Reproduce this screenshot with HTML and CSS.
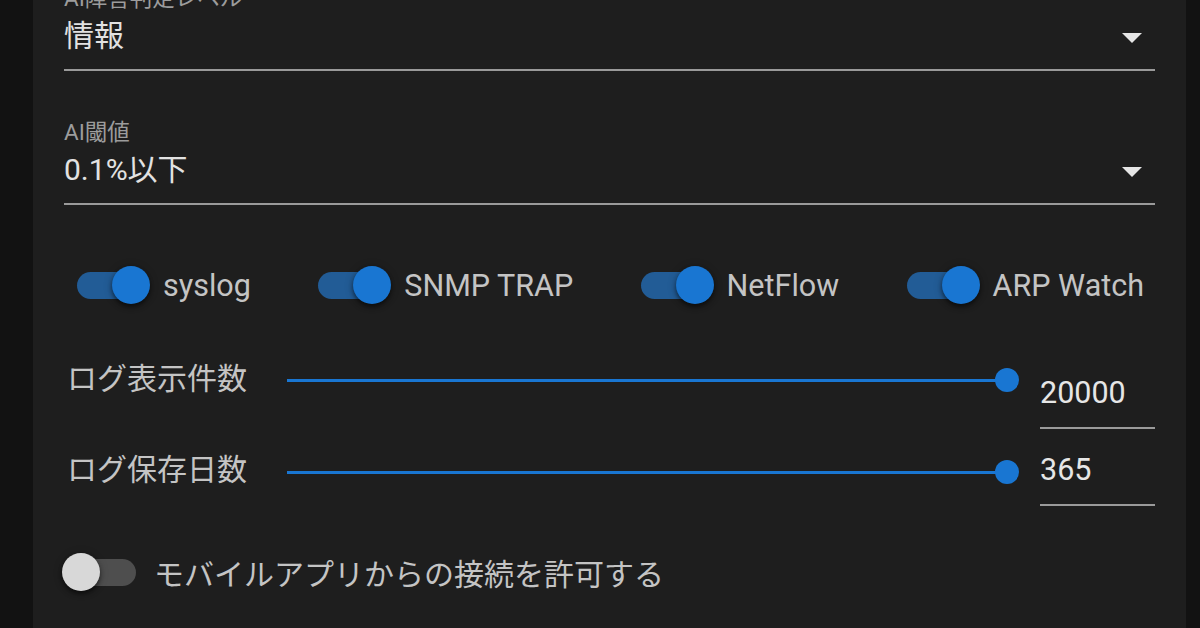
FILE: index.html
```html
<!DOCTYPE html>
<html lang="ja">
<head>
    <meta charset="UTF-8">
    <meta name="viewport" content="width=device-width, initial-scale=1.0">
    <title>設定</title>
    <link rel="stylesheet" href="styles.css">
</head>
<body>
    <div class="card">
        <div class="field field-first">
            <div class="field-label">AI障害判定レベル</div>
            <div class="field-value">
                <span>情報</span>
                <span class="arrow"></span>
            </div>
        </div>

        <div class="field">
            <div class="field-label">AI閾値</div>
            <div class="field-value">
                <span>0.1%以下</span>
                <span class="arrow"></span>
            </div>
        </div>

        <div class="switch-row">
            <label class="switch on">
                <span class="track"><span class="thumb"></span></span>
                <span class="switch-label">syslog</span>
            </label>
            <label class="switch on">
                <span class="track"><span class="thumb"></span></span>
                <span class="switch-label">SNMP TRAP</span>
            </label>
            <label class="switch on">
                <span class="track"><span class="thumb"></span></span>
                <span class="switch-label">NetFlow</span>
            </label>
            <label class="switch on">
                <span class="track"><span class="thumb"></span></span>
                <span class="switch-label">ARP Watch</span>
            </label>
        </div>

        <div class="slider-row row-count">
            <div class="slider-label">ログ表示件数</div>
            <div class="slider"><span class="slider-thumb"></span></div>
            <div class="num-field">20000</div>
        </div>

        <div class="slider-row row-days">
            <div class="slider-label">ログ保存日数</div>
            <div class="slider"><span class="slider-thumb"></span></div>
            <div class="num-field">365</div>
        </div>

        <div class="mobile-row">
            <label class="switch">
                <span class="track"><span class="thumb"></span></span>
                <span class="switch-label">モバイルアプリからの接続を許可する</span>
            </label>
        </div>
    </div>
</body>
</html>
```

FILE: styles.css
```css
* {
    margin: 0;
    padding: 0;
    box-sizing: border-box;
}

body {
    font-family: Roboto, "Noto Sans CJK JP", sans-serif;
    background: #121212;
    height: 100vh;
    overflow: hidden;
    display: flex;
}

.card {
    margin-left: 33px;
    width: 1153px;
    min-height: 100vh;
    background: #1e1e1e;
    padding: 0 31px;
}

/* select fields */
.field {
    margin-top: 47px;
    padding-bottom: 13px;
    border-bottom: 2px solid #9a9a9a;
}

.field-first {
    margin-top: -16px;
}

.field-label {
    font-size: 22.5px;
    line-height: 28px;
    color: #9c9c9c;
    margin-bottom: 4px;
}

.field-value {
    display: flex;
    align-items: center;
    justify-content: space-between;
    font-size: 30px;
    line-height: 40px;
    color: #e2e2e2;
}

.arrow {
    width: 0;
    height: 0;
    border-left: 10px solid transparent;
    border-right: 10px solid transparent;
    border-top: 10px solid #e6e6e6;
    margin-right: 13px;
    margin-top: 4px;
}

/* switches */
.switch-row {
    margin-top: 58px;
    height: 44px;
    display: flex;
    align-items: center;
    justify-content: space-between;
    padding: 0 11px 0 13px;
}

.switch {
    display: flex;
    align-items: center;
    height: 44px;
}

.track {
    position: relative;
    width: 68px;
    height: 27px;
    border-radius: 14px;
    background: #4e4e4e;
}

.thumb {
    position: absolute;
    top: -6px;
    left: -6px;
    width: 38px;
    height: 38px;
    border-radius: 50%;
    background: #d8d8d8;
    box-shadow: 0 3px 4px rgba(0, 0, 0, 0.45), 0 1px 8px rgba(0, 0, 0, 0.25);
}

.switch.on .track {
    background: #225c96;
}

.switch.on .thumb {
    left: 35px;
    background: #1976d2;
}

.switch-label {
    margin-left: 18px;
    font-size: 30.5px;
    color: #c4c4c4;
}

/* sliders */
.slider-row {
    display: flex;
    align-items: flex-start;
}

.row-count {
    margin-top: 52px;
}

.row-days {
    margin-top: 21px;
}

.slider-label {
    width: 223px;
    padding-left: 3px;
    font-size: 30px;
    line-height: 40px;
    color: #c4c4c4;
}

.slider {
    position: relative;
    width: 720px;
    height: 40px;
    margin-right: 33px;
}

.slider::before {
    content: "";
    position: absolute;
    left: 0;
    right: 0;
    top: 19px;
    height: 3px;
    background: #1976d2;
}

.slider-thumb {
    position: absolute;
    right: -12px;
    top: 8px;
    width: 24px;
    height: 24px;
    border-radius: 50%;
    background: #1976d2;
}

.row-count .slider {
    margin-top: 1px;
}

.row-days .slider {
    margin-top: 2px;
}

.num-field {
    width: 115px;
    font-size: 30.5px;
    line-height: 40px;
    color: #e6e6e6;
    padding-bottom: 14px;
    border-bottom: 2px solid #9a9a9a;
}

.row-count .num-field {
    margin-top: 14px;
}

.mobile-row {
    margin-top: 44px;
    padding-left: 4px;
}

.mobile-row .switch-label {
    font-size: 30px;
}
```
